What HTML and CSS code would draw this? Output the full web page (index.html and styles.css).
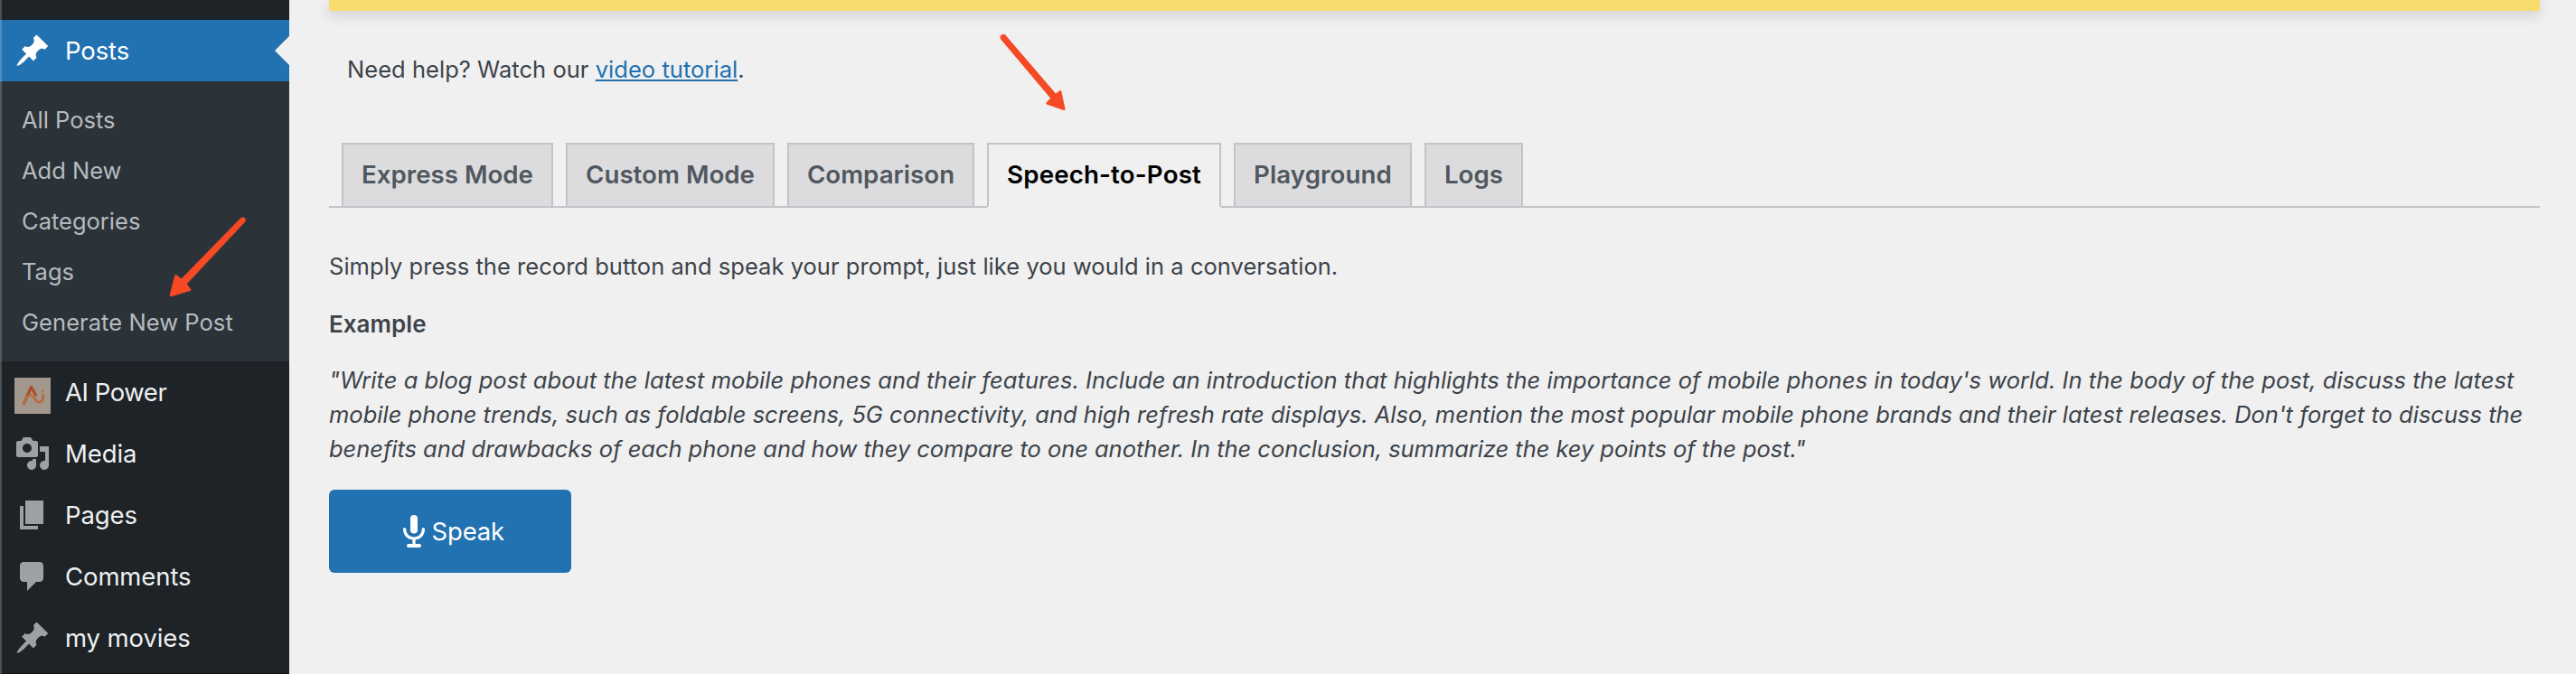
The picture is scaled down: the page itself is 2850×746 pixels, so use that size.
FILE: index.html
```
<!DOCTYPE html>
<html lang="en">
<head>
<meta charset="utf-8">
<title>Generate New Post</title>
<link rel="stylesheet" href="styles.css">
</head>
<body>
<svg class="defs" aria-hidden="true">
  <symbol id="pin" viewBox="0 0 20 20"><path d="M10.44 3.02l1.82-1.82 6.36 6.35-1.83 1.82c-1.05-.68-2.48-.57-3.41.36l-.75.75c-.92.93-1.04 2.35-.35 3.41l-1.83 1.82-2.41-2.41-2.8 2.79c-.42.42-3.38 2.71-3.8 2.29s1.86-3.39 2.28-3.81l2.79-2.79L4.1 9.36l1.83-1.82c1.05.69 2.48.57 3.4-.36l.75-.75c.93-.92 1.05-2.35.36-3.41z"/></symbol>
</svg>
<div class="page">
  <aside class="sidebar">
    <div class="item current">
      <svg class="icon"><use href="#pin"/></svg>
      <span>Posts</span>
    </div>
    <ul class="submenu">
      <li>All Posts</li>
      <li>Add New</li>
      <li>Categories</li>
      <li>Tags</li>
      <li class="generate">Generate New Post</li>
    </ul>
    <div class="item ai">
      <svg class="icon logo" viewBox="0 0 40 40">
        <rect width="40" height="40" fill="#a3988d"/>
        <path d="M10.500 28.500L18.500 10.500L23.500 19" fill="none" stroke="#a94f2b" stroke-width="3.200" stroke-linejoin="round" stroke-linecap="round"/>
        <path d="M10.500 28.500L14.500 21C18 17 21 20 23 24C25 28 31.500 28.500 31.500 23V19" fill="none" stroke="#b56e43" stroke-width="2.800" stroke-linecap="round"/>
        <circle cx="31.300" cy="15" r="1.400" fill="#b87449"/>
      </svg>
      <span>AI Power</span>
    </div>
    <div class="item">
      <svg class="icon" viewBox="0 0 20 20"><path d="M13 11V4c0-.55-.45-1-1-1h-1.670L9 1H5L3.670 3H2c-.55 0-1 .45-1 1v7c0 .55.45 1 1 1h10c.55 0 1-.45 1-1zM7 4.500c1.380 0 2.500 1.120 2.500 2.500S8.380 9.500 7 9.500 4.500 8.380 4.500 7 5.620 4.500 7 4.500zM14 6h5v10.500c0 1.380-1.120 2.500-2.500 2.500S14 17.880 14 16.500s1.120-2.500 2.500-2.500c.17 0 .34.02.5.05V9h-3V6zm-4 8.050V13h2v3.500c0 1.380-1.120 2.500-2.500 2.500S7 17.880 7 16.500 8.120 14 9.500 14c.17 0 .34.02.5.05z"/></svg>
      <span>Media</span>
    </div>
    <div class="item">
      <svg class="icon" viewBox="0 0 20 20"><path d="M6 15V2h10v13H6zm-1 1h8v2H3V5h2v11z"/></svg>
      <span>Pages</span>
    </div>
    <div class="item">
      <svg class="icon" viewBox="0 0 20 20"><path d="M5 2h9c1.100 0 2 .9 2 2v7c0 1.100-.9 2-2 2h-2l-5 5v-5H5c-1.100 0-2-.9-2-2V4c0-1.100.9-2 2-2z"/></svg>
      <span>Comments</span>
    </div>
    <div class="item">
      <svg class="icon"><use href="#pin"/></svg>
      <span>my movies</span>
    </div>
    <div class="sidebar-end"></div>
    <div class="edge"></div>
  </aside>

  <main class="content">
    <div class="notice"></div>
    <p class="help">Need help? Watch our <a href="#">video tutorial</a>.</p>
    <nav class="tabs">
      <a class="tab express">Express Mode</a>
      <a class="tab custom">Custom Mode</a>
      <a class="tab comparison">Comparison</a>
      <a class="tab speech active">Speech-to-Post</a>
      <a class="tab playground">Playground</a>
      <a class="tab logs">Logs</a>
    </nav>
    <p class="intro">Simply press the record button and speak your prompt, just like you would in a conversation.</p>
    <p class="label">Example</p>
    <p class="example"><span class="first">"Write a blog post about the latest mobile phones and their features. Include an introduction that highlights the importance of mobile phones in today's world. In the body of the post, discuss the latest</span><br><span class="second">mobile phone trends, such as foldable screens, 5G connectivity, and high refresh rate displays. Also, mention the most popular mobile phone brands and their latest releases. Don't forget to discuss the</span><br><span class="third">benefits and drawbacks of each phone and how they compare to one another. In the conclusion, summarize the key points of the post."</span></p>
    <button class="speak" type="button">
      <svg class="mic" viewBox="0 0 24 36">
        <rect x="8" y="0" width="8" height="20.500" rx="4" fill="#fff"/>
        <path d="M1.600 15.500C1.600 22 6 26 12 26S22.400 22 22.400 15.500M12 26v7" fill="none" stroke="#fff" stroke-width="3.200" stroke-linecap="round"/>
        <path d="M6 34h12" stroke="#fff" stroke-width="4" stroke-linecap="round"/>
      </svg>
      <span>Speak</span>
    </button>
  </main>

  <svg class="arrows" viewBox="0 0 2850 746" fill="#f54a24">
    <path d="M266.300 241.200Q268.800 239.300 271.300 241.800Q272.500 243.600 271 245.800L206.800 314.200L211.500 320.800Q211 322 209.500 322.300L189.500 328.200Q187.500 328.500 187.700 326.500L193.300 305Q194 303.500 195.500 304.500L200.700 308.500Z"/>
    <path d="M1107.200 43.500Q1105.500 41 1107.300 39.300Q1110 36.500 1112.400 38.700L1168 103.500L1172.700 100.200Q1174 99.500 1174.300 101L1178.500 120.500Q1178.700 122.500 1176.700 122L1158 115.500Q1156.600 114.700 1157.500 113.500L1162.200 108.700Z"/>
  </svg>
</div>
</body>
</html>
```
FILE: styles.css
```
* { box-sizing: border-box; }

body {
  margin: 0;
  background: #f0f0f0;
  color: #3c434a;
  font-family: Inter, "Liberation Sans", sans-serif;
  font-size: 25.5px;
  line-height: 38px;
}

p, ul { margin: 0; padding: 0; }

.defs { display: none; }

.page {
  position: relative;
  display: flex;
  width: 2850px;
  height: 746px;
  overflow: hidden;
}

/* Sidebar */
.sidebar {
  position: relative;
  display: flex;
  flex-direction: column;
  flex: none;
  width: 320px;
  padding-top: 22px;
  background: #1d2327;
}

.item {
  display: flex;
  align-items: center;
  gap: 16px;
  flex: none;
  height: 68px;
  padding-left: 16px;
  color: #f0f0f1;
  font-size: 27.5px;
  font-weight: 430;
  letter-spacing: -0.1px;
}

.icon {
  width: 40px;
  height: 40px;
  fill: #9ca1a6;
}

.logo { margin-top: 8px; }

.ai span { letter-spacing: -0.45px; }

.current {
  position: relative;
  background: #2271b1;
  color: #fff;
}

.current .icon { fill: #fff; }

.current::after {
  content: "";
  position: absolute;
  top: 18px;
  right: 0;
  border: 16px solid transparent;
  border-left-width: 0;
  border-right-color: #f0f0f0;
}

.submenu {
  flex: none;
  height: 310px;
  padding: 15px 0 15px 24px;
  background: #2c3338;
  color: #b5bbc0;
  line-height: 56px;
  list-style: none;
}

.generate { letter-spacing: 0.06px; }

.sidebar-end {
  height: 1px;
  margin-top: 5px;
  background: #190f16;
}

.edge {
  position: absolute;
  inset: 0 auto 0 0;
  width: 2px;
  background: rgba(255, 255, 255, 0.2);
}

/* Content */
.content {
  display: flex;
  flex-direction: column;
  align-items: flex-start;
  width: 2490px;
  padding-left: 44px;
}

.notice {
  width: 2446px;
  height: 12px;
  background: #f8dc6d;
  box-shadow: 0 4px 16px rgba(0, 0, 0, 0.17);
}

.help {
  margin: 46px 0 0 20px;
  letter-spacing: 0.04px;
}

.help a {
  color: #2271b1;
  text-decoration-thickness: 2px;
  text-underline-offset: 2px;
  text-decoration-skip-ink: none;
}

.tabs {
  display: flex;
  gap: 14px;
  width: 2446px;
  height: 72px;
  margin-top: 62px;
  padding-left: 14px;
  border-bottom: 2px solid #c3c4c7;
}

.tab {
  height: 70px;
  border: 2px solid #c3c4c7;
  border-bottom: 0;
  background: #dcdcde;
  color: #50575e;
  font-size: 27.7px;
  font-weight: 600;
  line-height: 66px;
  text-align: center;
  white-space: nowrap;
}

.express { width: 234px; }
.custom { width: 231px; }
.comparison { width: 207px; }
.speech { width: 259px; letter-spacing: 0.15px; }
.playground { width: 197px; letter-spacing: 0.08px; }
.logs { width: 109px; }

.active {
  height: 72px;
  border-bottom: 2px solid #f0f0f0;
  background: #f0f0f0;
  color: #000;
}

.intro {
  margin-top: 46px;
  letter-spacing: 0.035px;
}

.label {
  margin-top: 26px;
  font-size: 26px;
  font-weight: 600;
  letter-spacing: 0.05px;
}

.example {
  margin-top: 24px;
  font-style: italic;
  white-space: nowrap;
}

.first { letter-spacing: 0.045px; }
.second { letter-spacing: 0.014px; }
.third { letter-spacing: -0.045px; }

.speak {
  display: flex;
  align-items: center;
  justify-content: center;
  gap: 7.5px;
  width: 268px;
  height: 92px;
  margin-top: 26px;
  padding: 0 0 0 8px;
  border: 0;
  border-radius: 6px;
  background: #2271b1;
  color: #fff;
  font: 430 27.5px/38px Inter, "Liberation Sans", sans-serif;
  letter-spacing: -0.15px;
}

.mic {
  width: 24px;
  height: 36px;
}

/* Annotation arrows drawn over the interface */
.arrows {
  position: absolute;
  inset: 0;
  width: 2850px;
  height: 746px;
  pointer-events: none;
}
```
